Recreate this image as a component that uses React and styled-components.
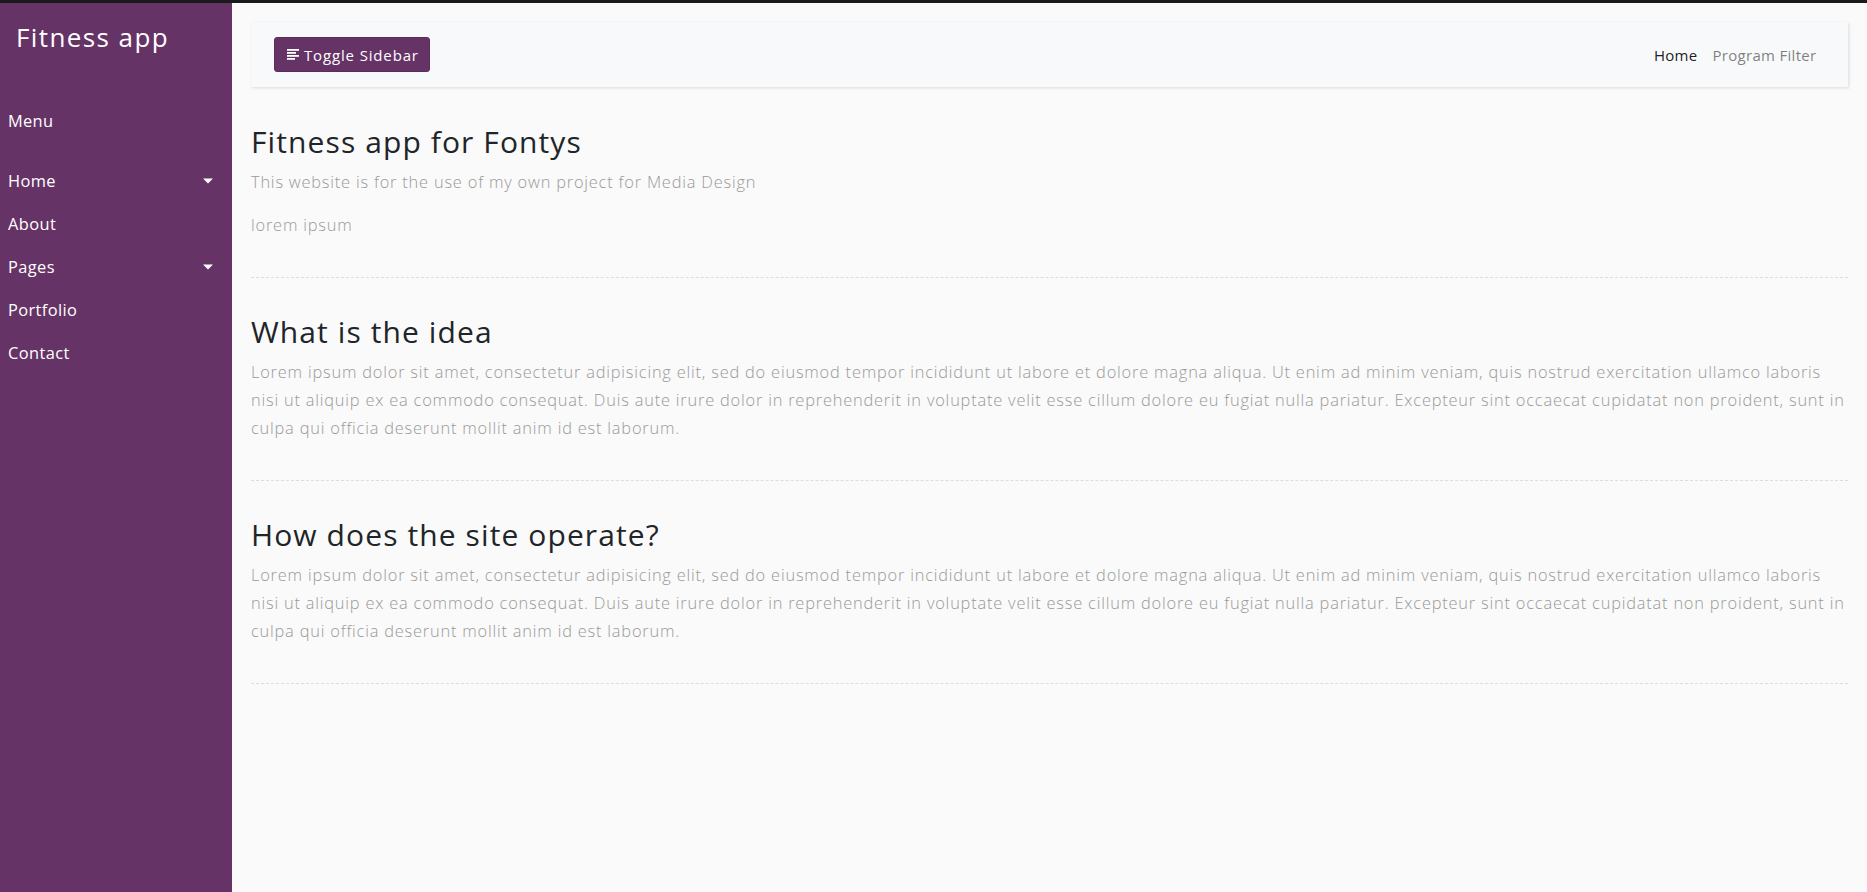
import React from 'react';
import styled, { createGlobalStyle } from 'styled-components';

const GlobalStyle = createGlobalStyle`
  * {
    box-sizing: border-box;
  }

  body {
    margin: 0;
    background: #fafafa;
    font-family: 'Open Sans', 'Noto Sans', sans-serif;
    font-size: 15px;
    color: #212529;
  }
`;

const menuItems = [
  { label: 'Home', dropdown: true },
  { label: 'About' },
  { label: 'Pages', dropdown: true },
  { label: 'Portfolio' },
  { label: 'Contact' }
];

const lorem =
  'Lorem ipsum dolor sit amet, consectetur adipisicing elit, sed do eiusmod tempor incididunt ut labore et dolore magna aliqua. Ut enim ad minim veniam, quis nostrud exercitation ullamco laboris nisi ut aliquip ex ea commodo consequat. Duis aute irure dolor in reprehenderit in voluptate velit esse cillum dolore eu fugiat nulla pariatur. Excepteur sint occaecat cupidatat non proident, sunt in culpa qui officia deserunt mollit anim id est laborum.';

const AlignLeftIcon = () => (
  <svg width="12" height="11" viewBox="0 0 12 11" fill="currentColor">
    <rect x="0" y="0" width="12" height="1.8" />
    <rect x="0" y="3" width="9" height="1.8" />
    <rect x="0" y="6" width="12" height="1.8" />
    <rect x="0" y="9" width="8" height="1.8" />
  </svg>
);

const App = () => {
  return (
    <>
      <GlobalStyle />
      <TopStrip />
      <Wrapper>
        <Sidebar>
          <SidebarHeader>
            <h3>Fitness app</h3>
          </SidebarHeader>
          <Components>
            <MenuLabel>Menu</MenuLabel>
            {menuItems.map(item => (
              <MenuItem key={item.label}>
                <MenuLink href="#" $dropdown={item.dropdown}>
                  {item.label}
                </MenuLink>
              </MenuItem>
            ))}
          </Components>
        </Sidebar>

        <Content>
          <Navbar>
            <ToggleButton type="button">
              <AlignLeftIcon />
              <span>Toggle Sidebar</span>
            </ToggleButton>
            <NavList>
              <NavLink href="#" $active>
                Home
              </NavLink>
              <NavLink href="#">Program Filter</NavLink>
            </NavList>
          </Navbar>

          <Heading>Fitness app for Fontys</Heading>
          <Text>This website is for the use of my own project for Media Design</Text>
          <Text>lorem ipsum</Text>

          <Line />

          <Heading>What is the idea</Heading>
          <Text>{lorem}</Text>

          <Line />

          <Heading>How does the site operate?</Heading>
          <Text>{lorem}</Text>

          <Line />
        </Content>
      </Wrapper>
    </>
  );
};

const TopStrip = styled.div`
  height: 3px;
  background: #1a1a1a;
`;

const Wrapper = styled.div`
  display: flex;
  align-items: stretch;
  min-height: calc(100vh - 3px);
`;

const Sidebar = styled.nav`
  flex: 0 0 232px;
  width: 232px;
  background: #663366;
  color: #fff;
`;

const SidebarHeader = styled.div`
  padding: 19px 16px 28px;

  h3 {
    margin: 0;
    font-size: 26px;
    font-weight: 500;
    line-height: 1.2;
    letter-spacing: 1.4px;
  }
`;

const Components = styled.ul`
  list-style: none;
  margin: 0;
  padding: 19px 0;
`;

const MenuLabel = styled.p`
  margin: 0 0 17px;
  padding: 9px 8px;
  font-size: 16.4px;
  line-height: 24px;
  letter-spacing: 0.3px;
`;

const MenuItem = styled.li`
  display: block;
`;

const MenuLink = styled.a`
  position: relative;
  display: block;
  padding: 9.5px 8px;
  font-size: 16.4px;
  line-height: 24px;
  letter-spacing: 0.4px;
  color: #fff;
  text-decoration: none;

  ${({ $dropdown }) =>
    $dropdown &&
    `
    &::after {
      content: '';
      position: absolute;
      right: 19px;
      top: 50%;
      transform: translateY(-50%);
      border-top: 5px solid #fff;
      border-left: 5px solid transparent;
      border-right: 5px solid transparent;
    }
  `}
`;

const Content = styled.main`
  flex: 1;
  min-width: 0;
  padding: 19px;
`;

const Navbar = styled.div`
  display: flex;
  align-items: center;
  justify-content: space-between;
  height: 65px;
  padding: 0 23px;
  margin-bottom: 37px;
  background: #f8f9fa;
  box-shadow: 1px 1px 3px rgba(0, 0, 0, 0.12);
`;

const ToggleButton = styled.button`
  display: flex;
  align-items: center;
  gap: 5px;
  height: 35px;
  padding: 0 10px 0 12px;
  background: #663366;
  border: 1px solid #5c2d5c;
  border-radius: 3px;
  color: #fff;
  font-family: inherit;
  font-size: 15px;
  letter-spacing: 0.85px;
  cursor: pointer;
`;

const NavList = styled.div`
  display: flex;
  align-items: center;
  margin-right: 1px;
`;

const NavLink = styled.a`
  padding: 7px 7.5px;
  font-size: 15px;
  letter-spacing: 0.3px;
  color: ${({ $active }) => ($active ? 'rgba(0, 0, 0, 0.9)' : 'rgba(0, 0, 0, 0.5)')};
  text-decoration: none;
`;

const Heading = styled.h2`
  margin: 0 0 8px;
  font-size: 30px;
  font-weight: 500;
  line-height: 36px;
  letter-spacing: 1.1px;
  color: #212529;
`;

const Text = styled.p`
  margin: 0 0 15px;
  font-size: 16.4px;
  font-weight: 300;
  line-height: 28px;
  letter-spacing: 0.8px;
  color: #999;
`;

const Line = styled.div`
  width: 100%;
  height: 1px;
  border-bottom: 1px dashed #ddd;
  margin: 38px 0 36px;
`;

export default App;
